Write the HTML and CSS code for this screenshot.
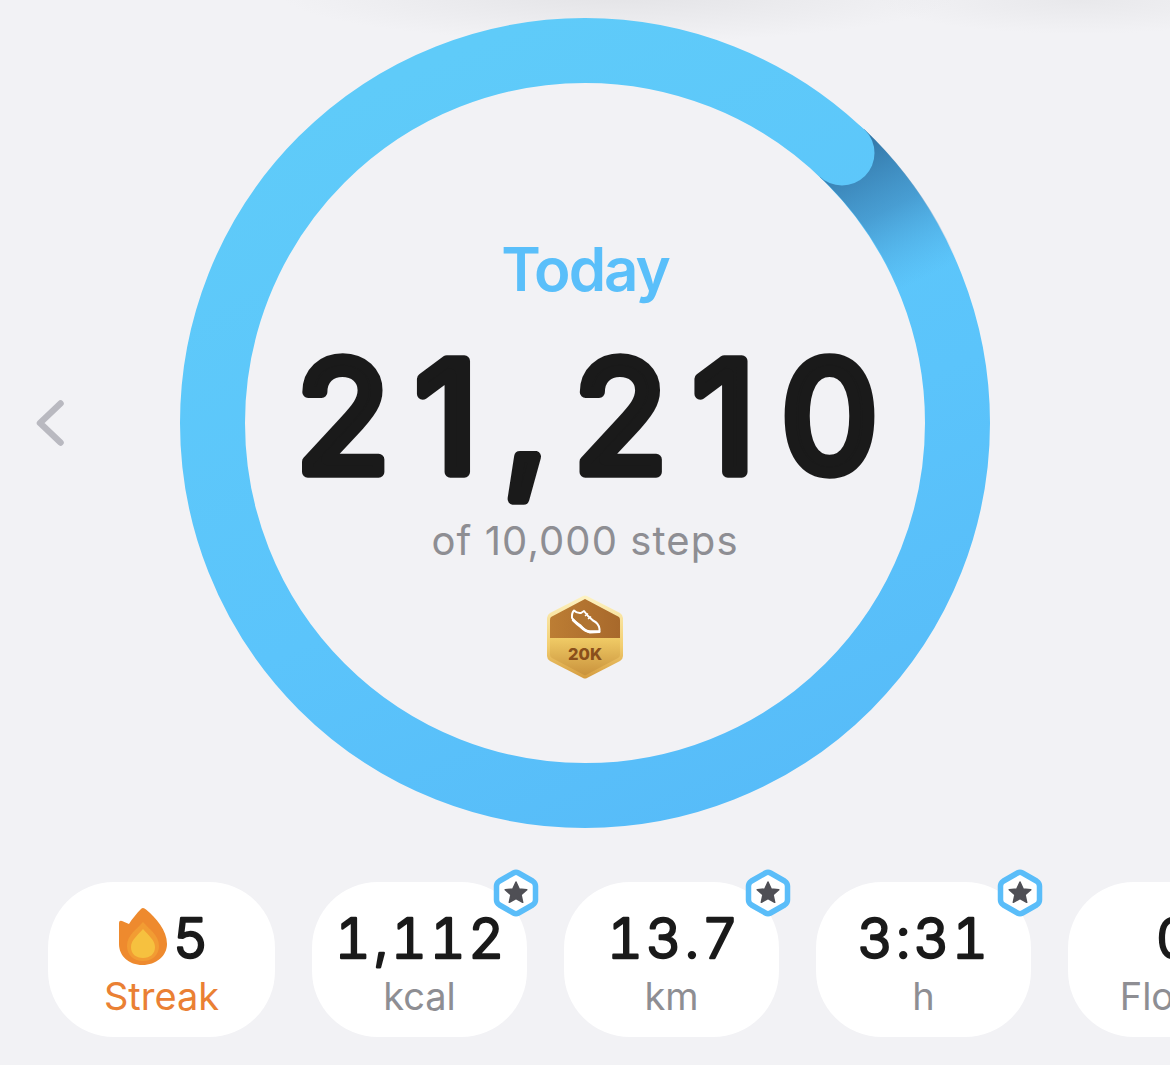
FILE: index.html
```html
<!DOCTYPE html>
<html lang="en">
<head>
<meta charset="utf-8">
<title>Steps today</title>
<link rel="stylesheet" href="styles.css">
</head>
<body>
<main class="page">
  <section class="stage">
    <svg class="chevron" viewBox="0 0 28 46" aria-hidden="true"><path d="M24.500 3.500 L4 23 L24.500 42.500"/></svg>
    <div class="ring-wrap">
      <svg class="ring" viewBox="0 0 810 810" aria-hidden="true">
        <defs>
          <linearGradient id="ringBase" gradientUnits="userSpaceOnUse" x1="350" y1="0" x2="700" y2="810">
            <stop offset="0" stop-color="#5fcbf9"/>
            <stop offset="0.55" stop-color="#5bc4fb"/>
            <stop offset="1" stop-color="#56baf8"/>
          </linearGradient>
          <linearGradient id="ringShade" gradientUnits="userSpaceOnUse" x1="665" y1="125" x2="735" y2="265">
            <stop offset="0" stop-color="#2f6f9f" stop-opacity="0.95"/>
            <stop offset="0.5" stop-color="#3a82b8" stop-opacity="0.6"/>
            <stop offset="1" stop-color="#4a9fd8" stop-opacity="0"/>
          </linearGradient>
        </defs>
        <circle class="ring-track" cx="405" cy="405" r="372.500"/>
        <path class="ring-shade" d="M662 135 A372.500 372.500 0 0 1 770 325"/>
        <circle class="ring-cap" cx="662" cy="135" r="32.500"/>
      </svg>
      <div class="ring-center">
        <div class="day">Today</div>
        <svg class="steps" viewBox="0 0 640 190" role="img" aria-label="21,210 steps"><text x="335" y="142" text-anchor="middle">21,210</text></svg>
        <div class="goal">of 10,000 steps</div>
        <svg class="medal" viewBox="0 0 76 84" role="img" aria-label="20K medal">
          <defs>
            <linearGradient id="medalRim" x1="0" y1="0" x2="0" y2="1">
              <stop offset="0" stop-color="#fdf3c4"/>
              <stop offset="0.6" stop-color="#f3cf70"/>
              <stop offset="1" stop-color="#d59c40"/>
            </linearGradient>
            <linearGradient id="medalTop" x1="0" y1="0" x2="1" y2="0">
              <stop offset="0" stop-color="#bd7e34"/>
              <stop offset="1" stop-color="#a7682b"/>
            </linearGradient>
            <linearGradient id="medalBottom" x1="0" y1="0" x2="0" y2="1">
              <stop offset="0" stop-color="#f0cb66"/>
              <stop offset="1" stop-color="#c68d38"/>
            </linearGradient>
            <clipPath id="medalClip"><path d="M38 4 L72 22 Q73 23 73 25 L73 60 Q73 62 71 63 L39 80 Q38 80.500 37 80 L5 63 Q3 62 3 60 L3 25 Q3 23 4 22 Z"/></clipPath>
          </defs>
          <path fill="url(#medalRim)" d="M36 1 Q38 0 40 1 L73 18 Q76 20 76 23 L76 61 Q76 64 73 66 L40 83 Q38 84 36 83 L3 66 Q0 64 0 61 L0 23 Q0 20 3 18 Z"/>
          <g clip-path="url(#medalClip)">
            <rect x="0" y="0" width="76" height="43" fill="url(#medalTop)"/>
            <rect x="0" y="43" width="76" height="41" fill="url(#medalBottom)"/>
          </g>
          <path class="shoe" d="M27 15.500 Q30 18.500 34 18 L37 16 L41 21 L46 25.500 Q52 28.500 52.500 34 L52.500 37 L43 37.500 Q38 36 33 30 Q28 27 25 23 Q24.500 18 27 15.500 Z"/>
          <path class="shoe-sole" d="M26 25 Q30 29 34 32 Q39 37 44 36.500 L52 36.500"/>
          <path class="shoe-lace" d="M38 21 L41 18.500 M41 24 L44 21.500"/>
          <text class="medal-text" x="38" y="64.500" text-anchor="middle">20K</text>
        </svg>
      </div>
    </div>
  </section>

  <section class="tiles">
    <article class="tile tile-streak">
      <div class="value">
        <svg class="flame" viewBox="0 0 49 57" aria-hidden="true">
          <path fill="#ee8a2e" d="M25 0 Q26.500 0 28 1.500 C38 10 49 22 49 36 C49 48 38 57 24.500 57 C11 57 1 48 1 36 L1 15 Q1 12 4 13 L11 16 C14 11 19 5 23 1 Q24 0 25 0 Z"/>
          <path fill="#f29c33" d="M25 14 C31 21 41 27 41 38 C41 47 34 53 25 53 C16 53 9 47 9 38 C9 27 19 21 25 14 Z"/>
          <path fill="#f6c13f" d="M25 21 C30 27 37 32 37 39 C37 46 32 50 25 50 C18 50 13 46 13 39 C13 32 20 27 25 21 Z"/>
        </svg>
        <svg class="value-text value-text-short" viewBox="0 0 44 64"><text x="22" y="52" text-anchor="middle">5</text></svg>
      </div>
      <div class="label">Streak</div>
    </article>
    <article class="tile">
      <svg class="star-badge" viewBox="0 0 46 48" aria-hidden="true"><use href="#badge"/></svg>
      <div class="value"><svg class="value-text" viewBox="0 0 215 64"><text x="109" y="52" text-anchor="middle">1,112</text></svg></div>
      <div class="label">kcal</div>
    </article>
    <article class="tile">
      <svg class="star-badge" viewBox="0 0 46 48" aria-hidden="true"><use href="#badge"/></svg>
      <div class="value"><svg class="value-text" viewBox="0 0 215 64"><text x="110" y="52" text-anchor="middle">13.7</text></svg></div>
      <div class="label">km</div>
    </article>
    <article class="tile">
      <svg class="star-badge" viewBox="0 0 46 48" aria-hidden="true"><use href="#badge"/></svg>
      <div class="value"><svg class="value-text" viewBox="0 0 215 64"><text x="108" y="52" text-anchor="middle">3:31</text></svg></div>
      <div class="label">h</div>
    </article>
    <article class="tile">
      <div class="value"><svg class="value-text" viewBox="0 0 215 64"><text x="107" y="52" text-anchor="middle">0</text></svg></div>
      <div class="label">Floors</div>
    </article>
  </section>
</main>
<svg class="defs" aria-hidden="true">
  <symbol id="badge" viewBox="0 0 46 48">
    <path fill="#fff" stroke="#5abdf9" stroke-width="5.500" stroke-linejoin="round" d="M20.500 4 Q23 2.600 25.500 4 L39.500 12 Q42.500 14 42.500 17 L42.500 31 Q42.500 34 39.500 36 L25.500 44 Q23 45.400 20.500 44 L6.500 36 Q3.500 34 3.500 31 L3.500 17 Q3.500 14 6.500 12 Z"/>
    <path fill="#4f4f55" stroke="#4f4f55" stroke-width="1.500" stroke-linejoin="round" d="M23 13 L26.200 20 L33.800 20.800 L28.100 25.800 L29.700 33.300 L23 29.500 L16.300 33.300 L17.900 25.800 L12.200 20.800 L19.800 20 Z"/>
  </symbol>
</svg>
</body>
</html>
```

FILE: styles.css
```css
* { box-sizing: border-box; }

html, body {
  margin: 0;
  height: 100%;
}

body {
  background-color: #f2f2f5;
  background-image:
    radial-gradient(ellipse 340px 48px at 620px -6px, #e3e3e6 0%, rgba(227,227,230,0) 100%),
    radial-gradient(ellipse 200px 34px at 1080px 0px, #e8e8eb 0%, rgba(232,232,235,0) 100%);
  background-repeat: no-repeat;
  font-family: Inter, "Liberation Sans", sans-serif;
  overflow: hidden;
}

.page {
  width: 1170px;
  height: 1065px;
  overflow: hidden;
}

.stage {
  position: relative;
  display: flex;
  justify-content: center;
  padding-top: 18px;
}

.chevron {
  position: absolute;
  left: 36px;
  top: 400px;
  width: 28px;
  height: 46px;
  fill: none;
  stroke: #b9b9c0;
  stroke-width: 6.500;
  stroke-linecap: round;
  stroke-linejoin: round;
}

.ring-wrap {
  display: grid;
  width: 810px;
  height: 810px;
}

.ring {
  grid-area: 1 / 1;
  width: 810px;
  height: 810px;
}

.ring-track {
  fill: none;
  stroke: url(#ringBase);
  stroke-width: 65;
}

.ring-shade {
  fill: none;
  stroke: url(#ringShade);
  stroke-width: 65;
}

.ring-cap { fill: url(#ringBase); }

.ring-center {
  grid-area: 1 / 1;
  display: flex;
  flex-direction: column;
  align-items: center;
  padding-top: 217px;
}

.day {
  font-size: 60px;
  line-height: 68px;
  font-weight: 600;
  color: #5abffa;
  letter-spacing: -2px;
}

.steps {
  flex: none;
  margin-top: 27px;
  width: 640px;
  height: 190px;
  overflow: visible;
}

.steps text {
  font-size: 153px;
  font-weight: 400;
  letter-spacing: 26px;
  fill: #1a1a1a;
  stroke: #1a1a1a;
  stroke-width: 11.500px;
  stroke-linejoin: round;
}

.goal {
  margin-top: -3px;
  font-size: 40px;
  line-height: 48px;
  letter-spacing: 1.100px;
  color: #8e8e93;
}

.medal {
  flex: none;
  margin-top: 30px;
  width: 76px;
  height: 84px;
}

.shoe {
  fill: #b07432;
  stroke: #fff;
  stroke-width: 2;
  stroke-linejoin: round;
}

.shoe-sole {
  fill: none;
  stroke: #fff;
  stroke-width: 2.500;
  stroke-linecap: round;
}

.shoe-lace {
  fill: none;
  stroke: #fff;
  stroke-width: 1.500;
}

.medal-text {
  font-family: Inter, "Liberation Sans", sans-serif;
  font-size: 16.500px;
  font-weight: 800;
  fill: #8a4f1b;
}

.tiles {
  display: flex;
  gap: 37px;
  margin-top: 54px;
  padding-left: 48px;
}

.tile {
  position: relative;
  flex: 0 0 215px;
  height: 155px;
  display: flex;
  flex-direction: column;
  align-items: center;
  padding-top: 24px;
  background: #fff;
  border-radius: 66px;
}

.tile-streak { flex-basis: 227px; }

.value {
  display: flex;
  align-items: center;
  gap: 3px;
  height: 64px;
}

.tile-streak .value { margin-left: 9px; }

.value-text {
  flex: none;
  width: 215px;
  height: 64px;
  overflow: visible;
}

.value-text-short { width: 44px; }

.value-text text {
  font-size: 55px;
  font-weight: 300;
  font-feature-settings: "tnum";
  letter-spacing: 3px;
  fill: #1a1a1a;
  stroke: #1a1a1a;
  stroke-width: 2.600px;
  stroke-linejoin: round;
}

.flame {
  flex: none;
  width: 49px;
  height: 57px;
  margin-top: -4px;
}

.label {
  margin-top: 1px;
  font-size: 38px;
  line-height: 50px;
  color: #8e8e93;
  white-space: nowrap;
}

.tile-streak .label { color: #ea8034; }

.star-badge {
  position: absolute;
  top: -13px;
  right: -12px;
  width: 46px;
  height: 48px;
}

.defs {
  position: absolute;
  width: 0;
  height: 0;
}
```
